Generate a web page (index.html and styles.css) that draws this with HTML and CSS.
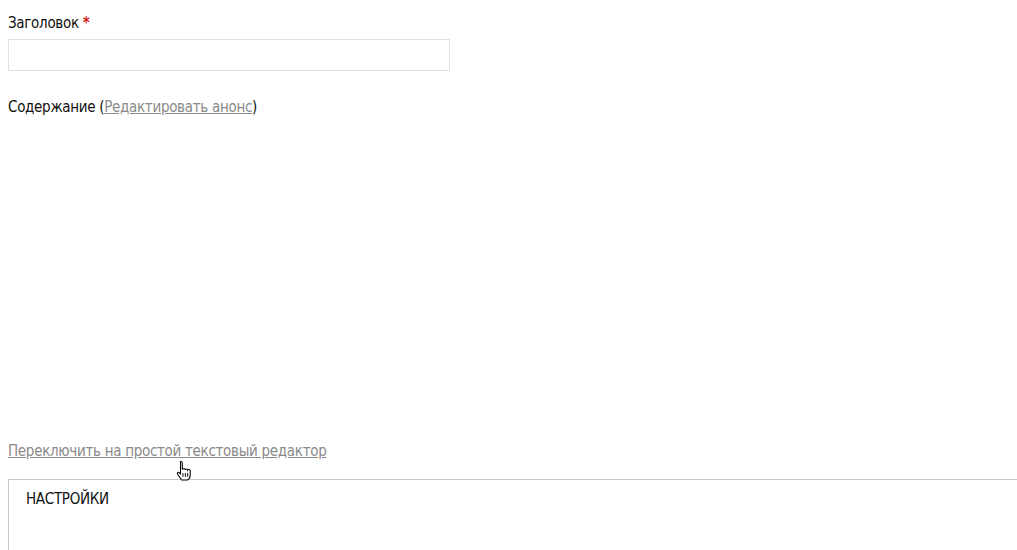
FILE: index.html
```html
<!DOCTYPE html>
<html lang="ru">
<head>
    <meta charset="UTF-8">
    <meta name="viewport" content="width=device-width, initial-scale=1.0">
    <title>Новая запись</title>
    <link rel="stylesheet" href="styles.css">
</head>
<body>
    <form class="node-form">
        <div class="form-item">
            <label class="form-label" for="edit-title">Заголовок <span class="required">*</span></label>
            <input class="form-text" type="text" id="edit-title">
        </div>
        <div class="form-item body-item">
            <label class="form-label">Содержание (<a href="#" class="summary-link">Редактировать анонс</a>)</label>
            <div class="editor-area"></div>
            <a href="#" class="switch-link">Переключить на простой текстовый редактор</a>
        </div>
        <div class="settings">
            <div class="settings-title">НАСТРОЙКИ</div>
        </div>
    </form>

    <!-- pointer over the switch link -->
    <svg class="cursor" width="18" height="21" viewBox="0 0 17 20">
        <path d="M5.5 1.5c.8 0 1.4.6 1.4 1.4v6.2c.2-.9 2.4-1 2.6.2.3-1 2.3-1 2.5.3.4-.9 2.3-.8 2.4.6v4.3c0 2-1.2 3.8-2.6 4.5H6.2L2.3 13.3c-.6-.8.5-2 1.4-1.4l1.5 1.3V2.9c0-.8-.5-1.4.3-1.4z" fill="#fff" stroke="#000" stroke-width="1"/>
        <path d="M7.5 12.5v3.5M9.8 12.5v3.5M12 12.5v3.5" stroke="#000" stroke-width="0.9"/>
    </svg>
</body>
</html>
```

FILE: styles.css
```css
html, body {
    margin: 0;
    padding: 0;
}
body {
    font-family: "DejaVu Sans Condensed", "Liberation Sans", sans-serif;
    font-size: 15px;
    letter-spacing: -0.3px;
    color: #111;
    background: #fff;
    overflow: hidden;
    position: relative;
    height: 550px;
}
.node-form {
    padding: 13px 0 0 8px;
}
.form-label {
    display: block;
    line-height: 20px;
    margin-bottom: 6px;
}
.required {
    color: #d21f1f;
    font-weight: bold;
}
.form-text {
    display: block;
    box-sizing: border-box;
    width: 442px;
    height: 32px;
    margin: 0;
    border: 1px solid #e2e2e2;
    background: #fff;
}
.body-item {
    margin-top: 26px;
}
.summary-link,
.switch-link {
    color: #8a8a8a;
    text-decoration: underline;
}
.editor-area {
    height: 318px;
}
.switch-link {
    display: inline-block;
    line-height: 20px;
}
.settings {
    margin-top: 18px;
    border-top: 1px solid #c8c8c8;
    border-left: 1px solid #c8c8c8;
    height: 61px;
    margin-right: -20px;
    padding: 9px 17px 0;
}
.settings-title {
    line-height: 20px;
}
.cursor {
    position: absolute;
    left: 175px;
    top: 460px;
}
```
